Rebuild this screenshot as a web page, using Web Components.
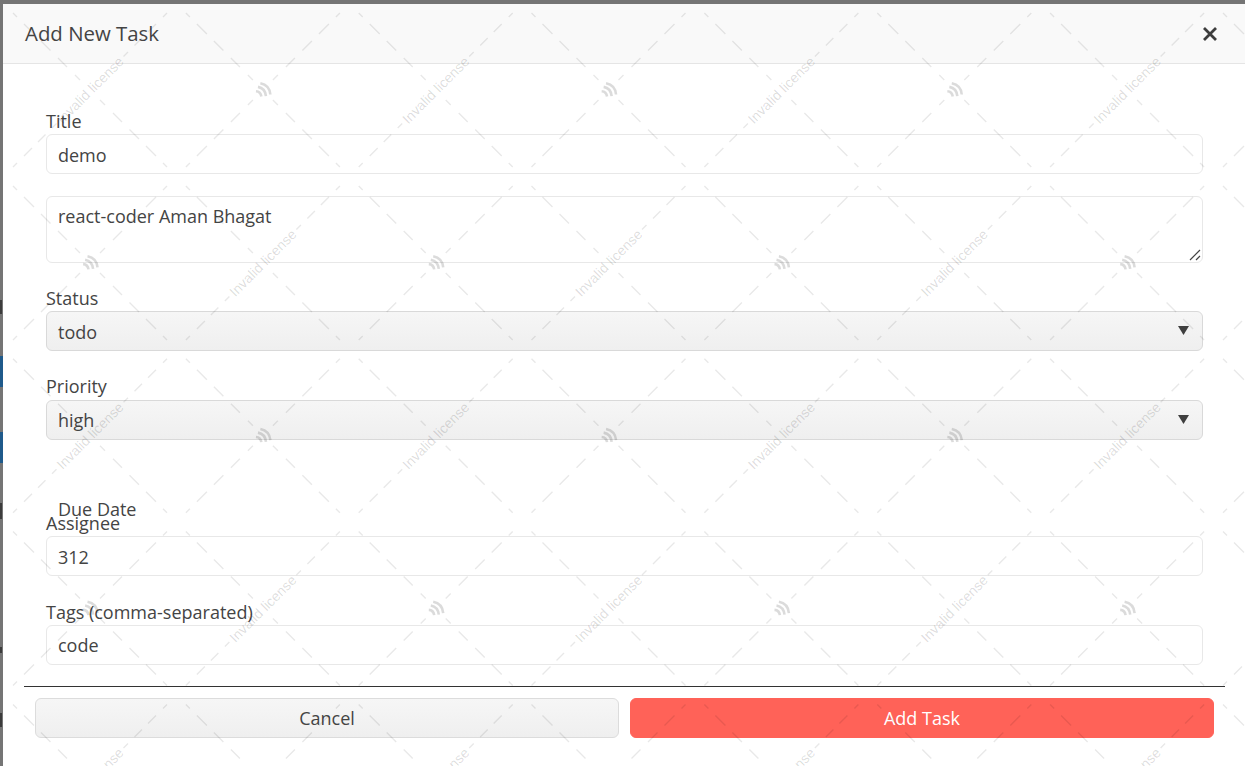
<!DOCTYPE html>
<html><head><meta charset="utf-8"><style>
html,body{margin:0;padding:0;width:100%;height:100%;overflow:hidden}
body{font-family:"Open Sans","Noto Sans",sans-serif;color:#444}
</style></head><body>
<task-page>
  <backdrop-strip slot="strip"></backdrop-strip>
  <task-modal>
    <modal-header slot="header">Add New Task</modal-header>
    <form-field label="Title" value="demo" style="--nudge:2px"></form-field>
    <form-field kind="area" value="react-coder Aman Bhagat"></form-field>
    <form-field kind="select" label="Status" value="todo"></form-field>
    <form-field kind="select" label="Priority" value="high"></form-field>
    <due-label>Due Date</due-label>
    <form-field label="Assignee" value="312" style="margin-bottom:22.6px"></form-field>
    <form-field label="Tags (comma-separated)" value="code" style="--nudge:0px"></form-field>
    <modal-footer slot="footer"></modal-footer>
  </task-modal>
  <license-watermark slot="overlay"></license-watermark>
</task-page>
<script>
function def(name, html, init){
  customElements.define(name, class extends HTMLElement{
    constructor(){super();this.attachShadow({mode:'open'}).innerHTML=html;}
    connectedCallback(){if(init)init(this);}
  });
}
def('task-page',`<style>
:host{display:grid;grid-template-columns:3px 1fr;grid-template-rows:4px 1fr;width:1245px;height:766px;overflow:hidden;position:relative;background:#757575}
.top{grid-column:1/3}
.strip{grid-row:2}
.main{grid-row:2;min-width:0;min-height:0;overflow:hidden}
</style><div class="top"></div><div class="strip"><slot name="strip"></slot></div><div class="main"><slot></slot></div><slot name="overlay"></slot>`);
def('backdrop-strip',`<style>
:host{display:flex;flex-direction:column;height:100%;background:#757575}
i{display:block;flex:none}
.blue{background:#1f5a8b;height:31px}
.dark{background:#3c3c3c;width:2px}
</style>
<i style="height:296px"></i><i class="dark" style="height:14px"></i>
<i style="height:42px"></i><i class="blue"></i><i style="height:45px"></i><i class="blue"></i>
<i style="height:40px"></i><i class="dark" style="height:16px"></i>
<i style="height:128px"></i><i class="dark" style="height:6px"></i>
<i style="height:60px"></i><i class="dark" style="height:14px"></i>`);
def('task-modal',`<style>
:host{display:flex;flex-direction:column;height:100%;background:#fff;box-sizing:border-box}
.body{display:flex;flex-direction:column;padding:43.6px 42px 0 43px}
</style><slot name="header"></slot><div class="body"><slot></slot></div><slot name="footer"></slot>`);
def('modal-header',`<style>
:host{display:flex;align-items:center;justify-content:space-between;height:60px;box-sizing:border-box;padding:0 28px 1px 22px;background:#f9f9f9;border-bottom:1px solid #e5e5e5;font-size:20.4px;color:#444}
svg{display:block;margin-top:1px}
</style><span><slot></slot></span><svg width="14" height="14" viewBox="0 0 14 14"><path d="M1 1 13 13M13 1 1 13" stroke="#3d3d3d" stroke-width="2.8" fill="none"/></svg>`);
def('form-field',`<style>
:host{display:block;margin-bottom:22px;font-size:18px;line-height:26.4px;color:#444}
label{display:block}
.box{position:relative;box-sizing:border-box;height:40px;border:1px solid #e8e8e8;border-radius:6px;padding:var(--nudge,1px) 11px 0;display:flex;align-items:center;background:transparent}
:host([kind=area]) .box{height:67px;align-items:flex-start;padding-top:6px}
:host([kind=select]) .box{border-color:#d9d9d9;background:linear-gradient(#f6f6f6,#efefef)}
svg{position:absolute;display:none}
:host([kind=area]) .grip{display:block;right:1px;bottom:1px}
:host([kind=select]) .arrow{display:block;right:13px;top:14px}
:host(:not([label])) label{display:none}
</style><label></label><div class="box"><span class="v"></span>
<svg class="grip" width="12" height="12" viewBox="0 0 12 12"><path d="M1 11 11 1M7 11 11 7" stroke="#444" stroke-width="1.2" fill="none"/></svg>
<svg class="arrow" width="11" height="9" viewBox="0 0 11 9"><path d="M0 0H11L5.5 9Z" fill="#3f3f3f"/></svg></div>`,
el=>{el.shadowRoot.querySelector('label').textContent=el.getAttribute('label')||'';el.shadowRoot.querySelector('.v').textContent=el.getAttribute('value')||'';});
def('due-label',`<style>:host{display:block;box-sizing:border-box;height:48px;padding:34.6px 0 0 12px;font-size:18px;line-height:26.4px;color:#444}</style><slot></slot>`);
def('modal-footer',`<style>
:host{display:block;margin:-1px 20px 0 21px}
.row{border-top:1px solid #333;display:flex;gap:11px;padding:11px 11px 0}
.btn{flex:1 1 0;height:40px;box-sizing:border-box;border-radius:6px;display:flex;align-items:center;justify-content:center;font-size:18px}
.c{border:1px solid #dcdcdc;background:linear-gradient(#f6f6f6,#efefef);color:#444}
.a{border:1px solid #ff6258;background:#ff6258;color:#fff}
</style><div class="row"><div class="btn c">Cancel</div><div class="btn a">Add Task</div></div>`);
def('license-watermark',`<style>
:host{position:absolute;inset:0;pointer-events:none;display:block}
svg{display:block;width:1245px;height:766px}
text{font:14px "Liberation Sans",Arial,sans-serif;fill:#000;fill-opacity:.14}
</style><svg xmlns="http://www.w3.org/2000/svg" viewBox="0 0 1245 766"></svg>`,el=>{
  const svg=el.shadowRoot.querySelector('svg');
  const H=172.85,X0=90,Y0=90;
  const full=[[10,15],[23,32],[39.5,49],[56,66],[73,77]];
  const cut=[[33.5,38],[44.5,52],[58,66],[73,77]];
  let s='';
  const seg=(cx,cy,dx,dy,list)=>{for(const[a,b]of list){for(const sg of[1,-1]){s+=`M${(cx+sg*a*dx).toFixed(1)} ${(cy+sg*a*dy).toFixed(1)}L${(cx+sg*b*dx).toFixed(1)} ${(cy+sg*b*dy).toFixed(1)}`;}}};
  let texts='',logos='';
  for(let r=-1;r<6;r++){for(let c=-1;c<9;c++){
    const isText=(((r+c)%2)+2)%2===0;
    const cx=X0+c*H,cy=Y0+r*H;
    if(cx<-100||cx>1345||cy<-100||cy>866)continue;
    seg(cx,cy,1,1,full);
    if(isText){
      seg(cx,cy,1,-1,cut);
      texts+=`<text text-anchor="middle" dominant-baseline="central" transform="translate(${cx} ${cy}) rotate(-45)">Invalid license</text>`;
    }else{
      seg(cx,cy,1,-1,full);
      logos+=`<g transform="translate(${cx-8.5} ${cy-8.5})" fill="none" stroke="#000" stroke-opacity=".14" stroke-width="2.6"><path d="M6 1.8C12 3 15.5 7 16 13"/><path d="M3.6 5.4C8 6.2 11 9 11.6 14.6"/><path d="M1.6 9.8C4.6 10 6.6 12 7 15"/></g>`;
    }
  }}
  svg.innerHTML=`<path d="${s}" stroke="#000" stroke-opacity=".09" stroke-width="1.4" fill="none"/>`+texts+logos;
});
</script></body></html>
